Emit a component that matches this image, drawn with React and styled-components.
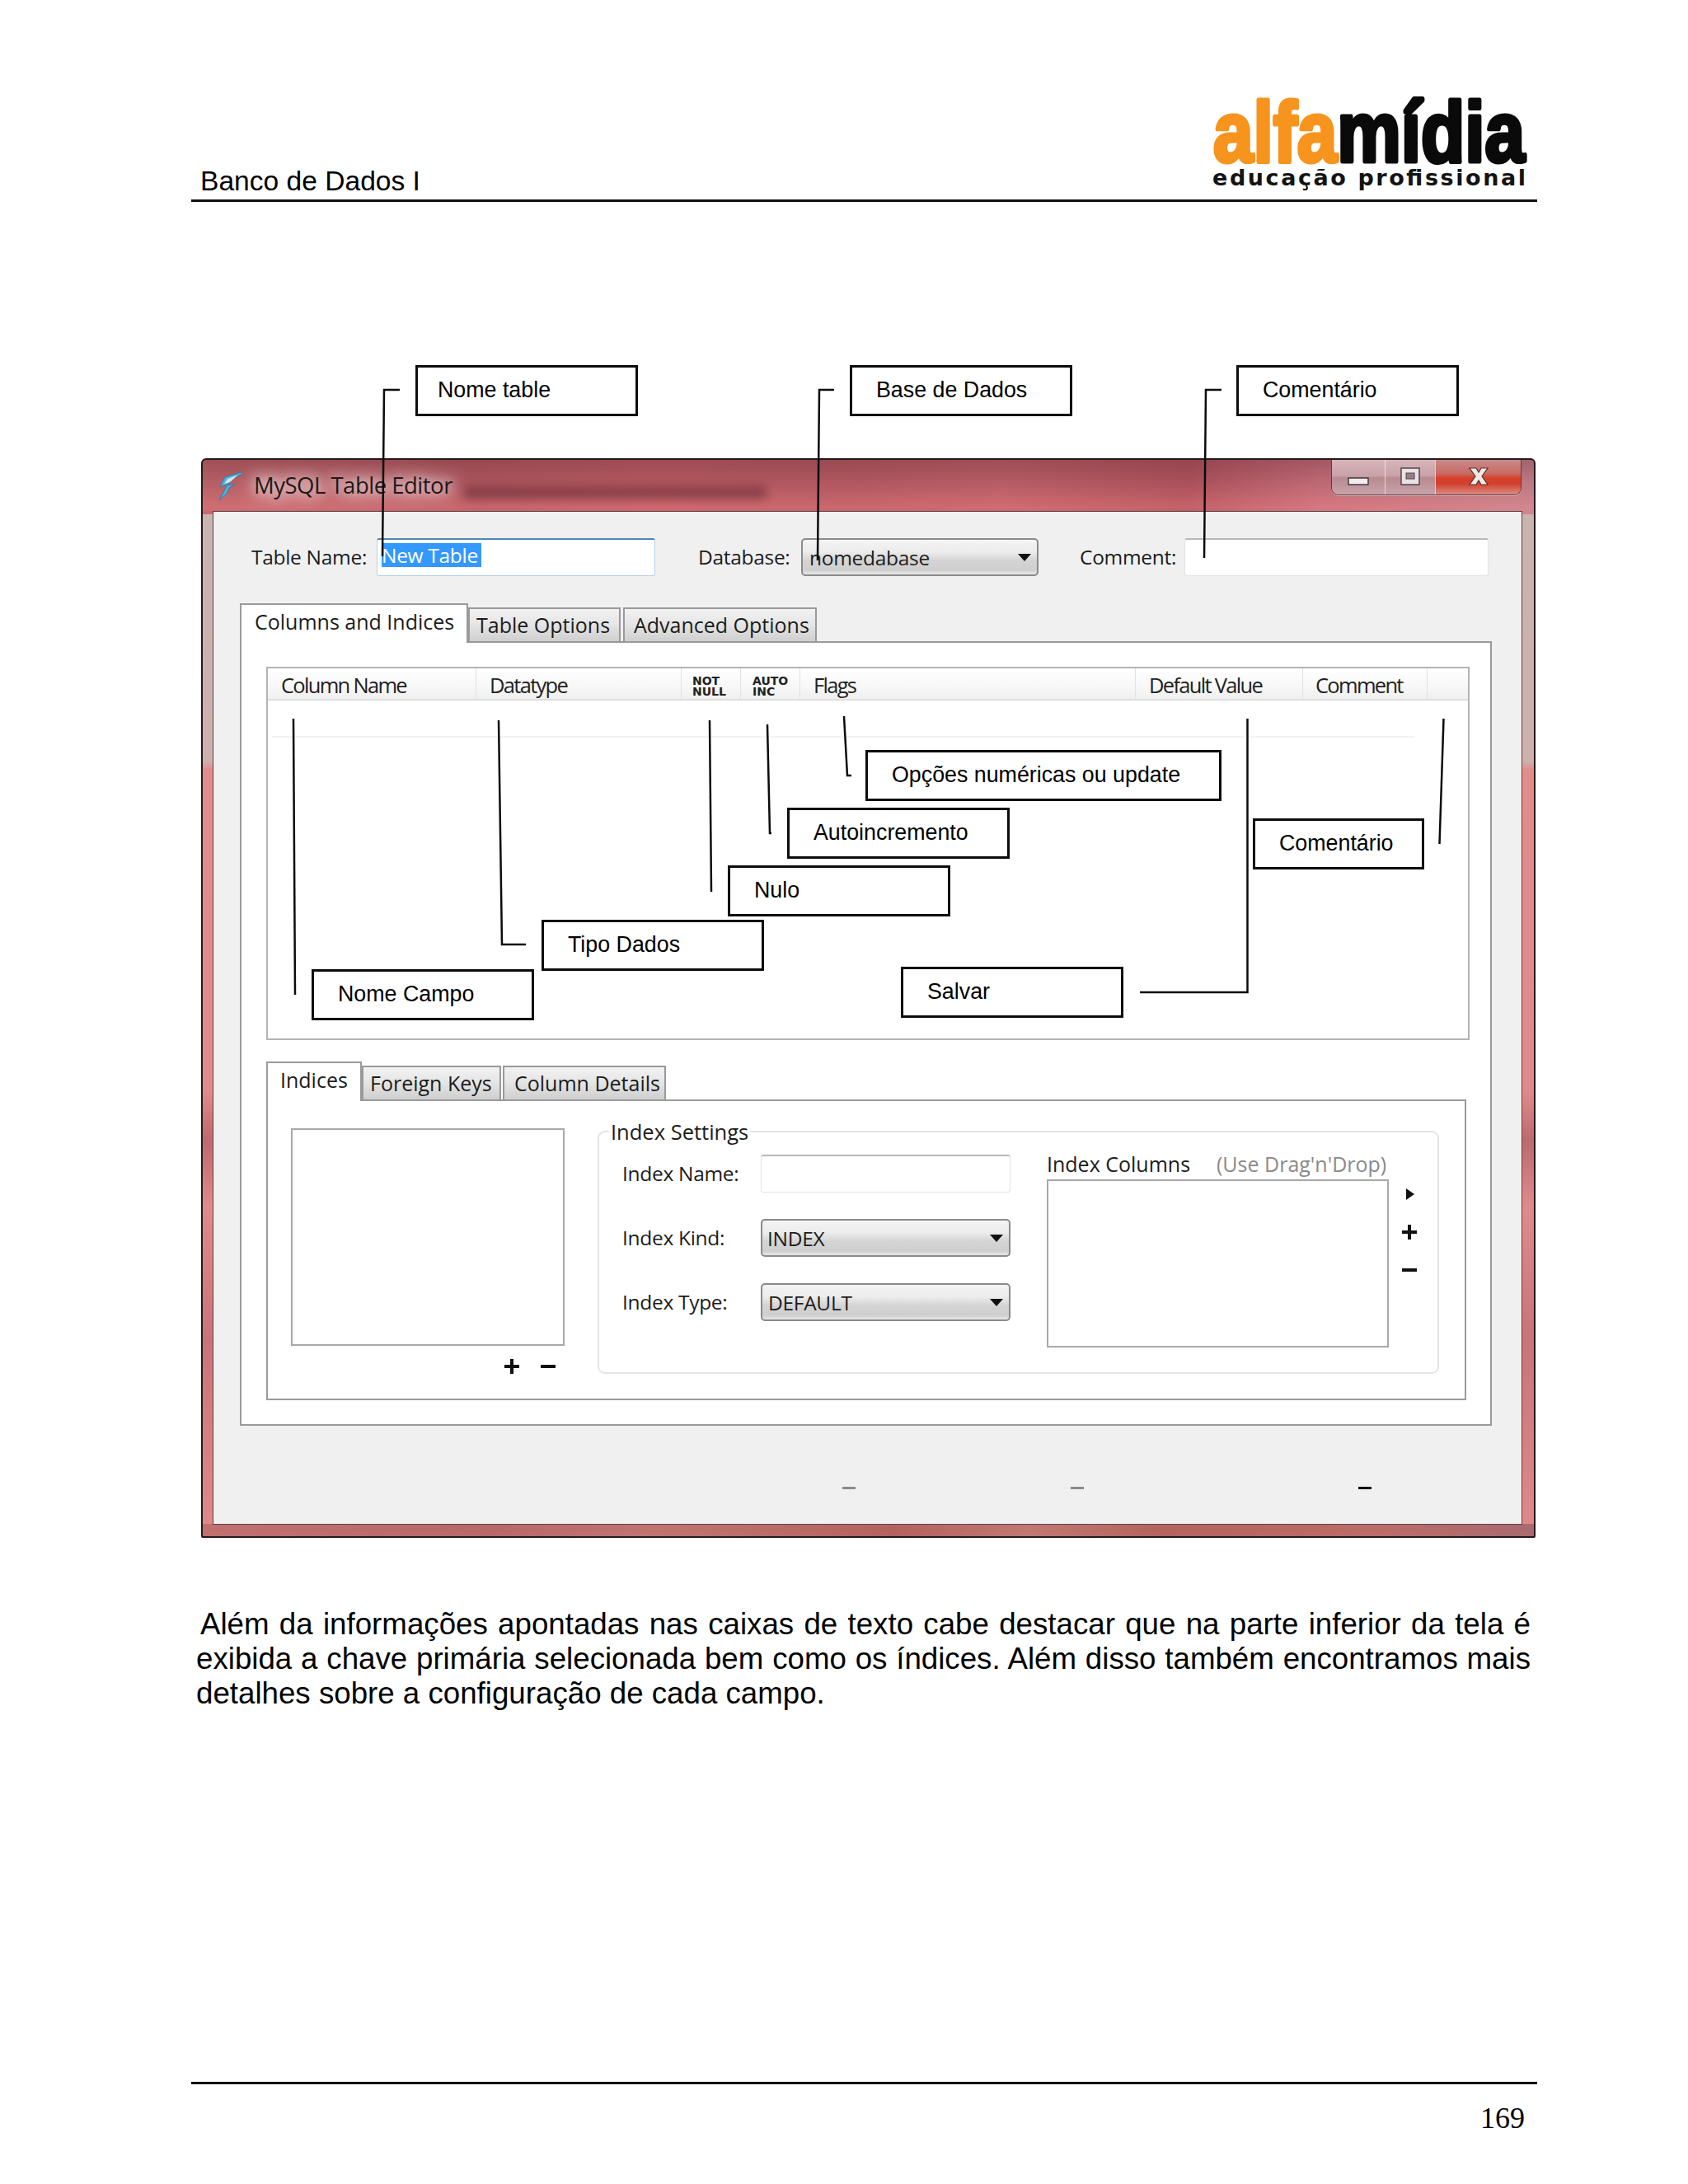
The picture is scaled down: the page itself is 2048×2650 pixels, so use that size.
import React from 'react';
import styled, { createGlobalStyle } from 'styled-components';

const GlobalStyle = createGlobalStyle`
  html, body {
    margin: 0;
    padding: 0;
    background: #fff;
  }
  * {
    box-sizing: border-box;
  }
`;

const uiFont = `'Open Sans', 'Noto Sans', sans-serif`;
const docFont = `'Liberation Sans', Arial, sans-serif`;

const Page = styled.div`
  position: relative;
  display: flex;
  flex-direction: column;
  width: 2048px;
  height: 2650px;
  padding: 0 183px 0 232px;
  overflow: hidden;
  font-family: ${docFont};
  color: #000;
`;

/* page header */
const Header = styled.header`
  display: flex;
  justify-content: space-between;
  align-items: flex-end;
  height: 245px;
  padding: 0 15px 0 11px;
  border-bottom: 3px solid #111;
`;

const HeaderTitle = styled.div`
  margin-bottom: 2px;
  font-size: 33.6px;
  line-height: 40px;
`;

const LogoSvg = styled.svg`
  display: block;
  width: 380px;
  height: 140px;
  margin: 0 -1px 6px 0;
  overflow: visible;
`;

const Logo = () => (
  <LogoSvg viewBox="0 0 380 140">
    <text
      x="1"
      y="100"
      textLength="378"
      lengthAdjust="spacingAndGlyphs"
      fontFamily="'Liberation Sans', Arial, sans-serif"
      fontWeight="700"
      fontSize="104"
      strokeWidth="5"
      strokeLinejoin="round"
    >
      <tspan fill="#f7941e" stroke="#f7941e">alfa</tspan>
      <tspan fill="#0a0a0a" stroke="#0a0a0a">mídia</tspan>
    </text>
    <text
      x="0"
      y="129"
      textLength="380"
      fontFamily="'DejaVu Sans', sans-serif"
      fontWeight="700"
      fontSize="27"
      fill="#141414"
    >
      educação profissional
    </text>
  </LogoSvg>
);

/* the MySQL window */
const Window = styled.section`
  position: relative;
  flex: none;
  width: 1619px;
  height: 1310px;
  margin: 311px 0 0 12px;
  padding: 0 15px 15px 13px;
  border: 2px solid #26181c;
  border-radius: 6px 6px 2px 2px;
  font-family: ${uiFont};
  color: #1c1c1c;
  background:
    linear-gradient(180deg, rgba(96, 40, 50, 0.38) 0, rgba(110, 50, 60, 0.16) 28px, rgba(240, 130, 130, 0.28) 58px, transparent 66px),
    linear-gradient(90deg, #c4686e 0, #b85c64 20%, #c26068 34%, #bc5e66 48%, #c4646c 60%, #b55660 74%, #cc7480 84%, #c98892 100%);
  background-size: 100% 66px;
  background-repeat: no-repeat;

  &::before {
    content: '';
    position: absolute;
    inset: 66px 0 0;
    background:
      linear-gradient(90deg, #c0706e 0, #b9686a 22%, #c07470 34%, #b4625f 52%, #c17872 62%, #b4635f 72%, #bc6c68 88%, #a86a70 100%) bottom / 100% 15px no-repeat,
      linear-gradient(180deg, #c9b4ae 0, #cdb0ac 300px, #e28c8c 310px, #e18a8c 700px, #bd6a6e 760px, #df8b8c 840px, #c97478 1000px, #e08a8a 1240px);
  }
`;

const TitleBar = styled.div`
  position: relative;
  display: flex;
  align-items: flex-start;
  height: 63px;
`;

const AppIconSvg = styled.svg`
  flex: none;
  width: 32px;
  height: 36px;
  margin: 14px 13px 0 4px;
`;

const AppIcon = () => (
  <AppIconSvg viewBox="0 0 32 36">
    <path d="M30 1 L10 7 L4 18 L13 16 L3 35 L12 27 L15 20 L22 16 L13 17 L18 9 L31 3 Z" fill="#4fb2dc" stroke="#2b7ea8" strokeWidth="1" />
    <path d="M26 4 L13 9 L9 15 L16 13 Z" fill="#c3e8f6" />
  </AppIconSvg>
);

const WindowTitle = styled.div`
  flex: none;
  margin-top: 13px;
  font-size: 27.5px;
  line-height: 36px;
  letter-spacing: -0.5px;
  color: #20181a;
  text-shadow: 0 0 14px rgba(255, 240, 240, 0.95), 0 0 22px rgba(255, 240, 240, 0.9), 0 0 30px rgba(255, 240, 240, 0.85);
`;

const BlurredTitle = styled.div`
  flex: none;
  width: 367px;
  height: 15px;
  margin: 32px 0 0 14px;
  background: rgba(86, 30, 42, 0.5);
  filter: blur(6px);
`;

const Controls = styled.div`
  display: flex;
  height: 43px;
  margin: 0 0 0 auto;
  border: 1px solid #5e3a42;
  border-top: none;
  border-radius: 0 0 9px 9px;
  overflow: hidden;
  box-shadow: 0 1px 0 rgba(255, 255, 255, 0.45);
`;

const ControlButton = styled.div`
  display: flex;
  align-items: center;
  justify-content: center;
  width: ${({ $w }) => $w}px;
  border-left: ${({ $first }) => ($first ? 'none' : '1px solid rgba(255, 240, 240, 0.7)')};
  background: ${({ $close }) =>
    $close
      ? 'linear-gradient(180deg, #c88a8c 0, #c96a62 40%, #d8402a 52%, #d2402e 68%, #dc8a80 100%)'
      : 'linear-gradient(180deg, #d6b6ba 0, #c9a2a8 46%, #b98a92 52%, #c7a4aa 100%)'};
`;

const ControlGlyph = styled.svg`
  display: block;
  width: 26px;
  height: 24px;
  margin-top: ${({ $low }) => ($low ? 10 : -2)}px;
`;

const Client = styled.div`
  position: relative;
  height: 1228px;
  padding: 32px 0 0 32px;
  background: #f0f0f0;
  box-shadow: 0 0 0 1px #5c4146;
`;

const FieldRow = styled.div`
  display: flex;
  height: 46px;
  padding-left: 14px;
`;

const FieldLabel = styled.div`
  flex: none;
  width: ${({ $w }) => $w}px;
  margin-left: ${({ $ml }) => $ml || 0}px;
  padding-top: 7px;
  font-size: 24.5px;
  line-height: 32px;
  letter-spacing: -0.3px;
  white-space: nowrap;
`;

const TextBox = styled.div`
  flex: none;
  display: flex;
  align-items: center;
  width: ${({ $w }) => $w}px;
  height: 46px;
  padding-left: 5px;
  background: #fff;
  border: 1px solid ${({ $focus }) => ($focus ? '#b4d2ea' : '#e3e3e3')};
  border-top: 2px solid ${({ $focus }) => ($focus ? '#4f86b8' : '#b8b8b8')};
  border-radius: 3px;
`;

const Selected = styled.span`
  width: 121px;
  height: 29px;
  margin-top: -6px;
  background: #3399ff;
  color: #fff;
  font-size: 24.5px;
  line-height: 29px;
  letter-spacing: -0.3px;
  white-space: nowrap;
`;

const Select = styled.div`
  flex: none;
  display: flex;
  align-items: center;
  justify-content: space-between;
  width: ${({ $w }) => $w}px;
  height: 46px;
  padding: 0 7px 0 ${({ $pad }) => $pad || 8}px;
  background: linear-gradient(180deg, #f4f4f4 0, #ececec 35%, #d4d4d4 60%, #cfcfcf 88%, #e8e8e8 100%);
  border: 2px solid #8a8a8a;
  border-radius: 5px;
  font-size: 24.5px;
  letter-spacing: -0.3px;
`;

const Caret = styled.span`
  flex: none;
  width: 0;
  height: 0;
  border-left: 8px solid transparent;
  border-right: 8px solid transparent;
  border-top: 9px solid #111;
`;

const TabStrip = styled.div`
  position: relative;
  z-index: 1;
  display: flex;
  align-items: flex-end;
  margin: ${({ $top }) => $top}px 0 -2px;
`;

const Tab = styled.div`
  flex: none;
  width: ${({ $w }) => $w}px;
  height: ${({ $active }) => ($active ? 48 : 43)}px;
  margin-left: ${({ $ml }) => $ml || 0}px;
  padding: ${({ $active }) => ($active ? 4 : 3)}px 0 0 ${({ $pad }) => $pad}px;
  border: 2px solid #9a9a9a;
  border-bottom: ${({ $active }) => ($active ? 'none' : '2px solid #9a9a9a')};
  background: ${({ $active }) => ($active ? '#fff' : 'linear-gradient(180deg, #f2f2f2 0, #e6e6e6 45%, #cfcfcf 100%)')};
  font-size: 25px;
  line-height: 32px;
  white-space: nowrap;
`;

const TabPanel = styled.div`
  width: ${({ $w }) => $w}px;
  height: ${({ $h }) => $h}px;
  background: #fff;
  border: 2px solid #9a9a9a;
`;

const MainPanel = styled(TabPanel)`
  padding: 29px 0 0 30px;
`;

const Columns = styled.div`
  width: 1460px;
  height: 453px;
  border: 2px solid #b4b4b4;
`;

const ColumnsHead = styled.div`
  display: flex;
  height: 39px;
  background: linear-gradient(180deg, #fff 0, #f9f9f9 50%, #f0f0f0 100%);
  border-bottom: 2px solid #dedede;
`;

const HeadCell = styled.div`
  flex: none;
  width: ${({ $w }) => $w}px;
  padding: 3px 0 0 ${({ $pad }) => $pad}px;
  border-right: 1px solid #e2e2e2;
  font-size: 25.5px;
  line-height: 34px;
  letter-spacing: -1.7px;
  white-space: nowrap;
  color: #222;
`;

const SmallHead = styled(HeadCell)`
  padding-top: 9px;
  font-family: 'DejaVu Sans', sans-serif;
  font-size: 14px;
  font-weight: 700;
  line-height: 13px;
  letter-spacing: 0;
`;

const RowRule = styled.div`
  height: 2px;
  margin: 43px 65px 0 5px;
  background: #f3f3f3;
`;

const SubPanel = styled(TabPanel)`
  display: flex;
  align-items: flex-start;
  padding: 33px 0 0 28px;
`;

const LeftColumn = styled.div`
  flex: none;
  width: 332px;
`;

const ListBox = styled.div`
  width: ${({ $w }) => $w}px;
  height: ${({ $h }) => $h}px;
  background: #fff;
  border: 2px solid #a8a8a8;
`;

const ListTools = styled.div`
  display: flex;
  justify-content: flex-end;
  gap: 26px;
  padding: 16px 11px 0 0;
`;

const ToolSvg = styled.svg`
  display: block;
  width: 18px;
  height: 18px;
`;

const ToolIcon = ({ kind }) => (
  <ToolSvg viewBox="0 0 18 18">
    {kind === 'plus' && <path d="M7 0h4v7h7v4h-7v7H7v-7H0V7h7z" fill="#111" />}
    {kind === 'minus' && <rect x="0" y="7" width="18" height="4" fill="#111" />}
    {kind === 'next' && <path d="M5 2 L15 9 L5 16z" fill="#111" />}
  </ToolSvg>
);

const Group = styled.div`
  position: relative;
  flex: none;
  display: flex;
  width: 1021px;
  height: 295px;
  margin: 3px 0 0 40px;
  padding: 27px 0 0 28px;
  border: 2px solid #e4e4e4;
  border-radius: 9px;
`;

const Legend = styled.div`
  position: absolute;
  top: -17px;
  left: 12px;
  padding: 0 2px;
  background: #fff;
  font-size: 25.5px;
  line-height: 32px;
`;

const FormColumn = styled.div`
  flex: none;
  display: flex;
  flex-direction: column;
  gap: 32px;
`;

const FormRow = styled.div`
  display: flex;
`;

const ColumnsBlock = styled.div`
  flex: none;
  margin-left: 44px;
`;

const BlockHead = styled.div`
  display: flex;
  height: 30px;
  font-size: 25px;
  line-height: 22px;
  white-space: nowrap;
`;

const BlockTitle = styled.span`
  width: 206px;
`;

const BlockHint = styled.span`
  color: #8a8a8a;
`;

const SideTools = styled.div`
  flex: none;
  display: flex;
  flex-direction: column;
  gap: 28px;
  margin: 39px 0 0 16px;
`;

const DashRow = styled.div`
  display: flex;
  padding: 74px 0 0 731px;
`;

const Dash = styled.span`
  flex: none;
  width: 16px;
  height: 3px;
  margin-left: ${({ $ml }) => $ml || 0}px;
  background: ${({ $dark }) => ($dark ? '#000' : '#8a8a8a')};
`;

/* text under the window */
const Paragraph = styled.p`
  width: 1619px;
  margin: 84px 0 0 6px;
  font-size: 36.7px;
  line-height: 42px;
  text-align: justify;
  text-indent: 5px;
`;

const Footer = styled.footer`
  margin-top: auto;
  height: 124px;
  padding: 21px 15px 0 0;
  border-top: 3px solid #111;
  text-align: right;
  font-family: 'Liberation Serif', 'Times New Roman', serif;
  font-size: 36px;
  line-height: 40px;
`;

/* callouts drawn over the screenshot */
const Callout = styled.div`
  position: absolute;
  left: ${({ $x }) => $x}px;
  top: ${({ $y }) => $y}px;
  display: flex;
  align-items: center;
  width: ${({ $w }) => $w}px;
  height: 62px;
  padding: 0 0 2px ${({ $pad }) => $pad || 29}px;
  background: #fff;
  border: 3px solid #0c0c0c;
  font-family: ${docFont};
  font-size: 26.8px;
  color: #000;
  white-space: nowrap;
`;

const Leaders = styled.svg`
  position: absolute;
  left: 0;
  top: 0;
  width: 2048px;
  height: 2650px;
  pointer-events: none;
`;

const callouts = [
  { label: 'Nome table', x: 504, y: 443, w: 270, pad: 24 },
  { label: 'Base de Dados', x: 1031, y: 443, w: 270 },
  { label: 'Comentário', x: 1500, y: 443, w: 270 },
  { label: 'Opções numéricas ou update', x: 1050, y: 910, w: 432 },
  { label: 'Autoincremento', x: 955, y: 980, w: 270 },
  { label: 'Nulo', x: 883, y: 1050, w: 270 },
  { label: 'Tipo Dados', x: 657, y: 1116, w: 270 },
  { label: 'Nome Campo', x: 378, y: 1176, w: 270 },
  { label: 'Salvar', x: 1093, y: 1173, w: 270 },
  { label: 'Comentário', x: 1520, y: 993, w: 208 },
];

const leaderPaths = [
  'M485 473 H466 L464 675',
  'M1012 473 H994 L992 680',
  'M1482 473 H1463 L1461 677',
  'M356 872 L358 1207',
  'M605 874 L609 1146 H638',
  'M861 874 L863 1082',
  'M931 879 L934 1011 H936',
  'M1024 869 L1028 941 H1033',
  'M1383 1204 H1513.5 V872',
  'M1751.5 872 L1746.5 1024',
];

export default function App() {
  return (
    <Page>
      <GlobalStyle />
      <Header>
        <HeaderTitle>Banco de Dados I</HeaderTitle>
        <Logo />
      </Header>

      <Window>
        <TitleBar>
          <AppIcon />
          <WindowTitle>MySQL Table Editor</WindowTitle>
          <BlurredTitle />
          <Controls>
            <ControlButton $w={64} $first>
              <ControlGlyph viewBox="0 0 26 24" $low>
                <rect x="1" y="8" width="24" height="8" fill="#f1ecee" stroke="#4a3a40" strokeWidth="1.5" />
              </ControlGlyph>
            </ControlButton>
            <ControlButton $w={61}>
              <ControlGlyph viewBox="0 0 26 24">
                <rect x="2" y="2" width="22" height="20" fill="#e9e2e4" stroke="#55444a" strokeWidth="1.5" />
                <rect x="8" y="8" width="10" height="7" fill="#9c7d86" stroke="#55444a" strokeWidth="1" />
              </ControlGlyph>
            </ControlButton>
            <ControlButton $w={104} $close>
              <ControlGlyph viewBox="0 0 26 24">
                <path d="M2 2h8l3 5 3-5h8l-7 10 7 10h-8l-3-5-3 5H2l7-10z" fill="#f1e9e6" stroke="#5a3030" strokeWidth="1.2" />
              </ControlGlyph>
            </ControlButton>
          </Controls>
        </TitleBar>

        <Client>
          <FieldRow>
            <FieldLabel $w={152}>Table Name:</FieldLabel>
            <TextBox $w={338} $focus>
              <Selected>New Table</Selected>
            </TextBox>
            <FieldLabel $w={125} $ml={52}>Database:</FieldLabel>
            <Select $w={288}>
              nomedabase
              <Caret />
            </Select>
            <FieldLabel $w={127} $ml={50}>Comment:</FieldLabel>
            <TextBox $w={369} />
          </FieldRow>

          <TabStrip $top={33}>
            <Tab $w={277} $pad={16} $active>Columns and Indices</Tab>
            <Tab $w={185} $pad={8}>Table Options</Tab>
            <Tab $w={235} $ml={3} $pad={11}>Advanced Options</Tab>
          </TabStrip>
          <MainPanel $w={1519} $h={952}>
            <Columns>
              <ColumnsHead>
                <HeadCell $w={253} $pad={16}>Column Name</HeadCell>
                <HeadCell $w={249} $pad={16}>Datatype</HeadCell>
                <SmallHead $w={72} $pad={13}>NOT<br />NULL</SmallHead>
                <SmallHead $w={72} $pad={14}>AUTO<br />INC</SmallHead>
                <HeadCell $w={407} $pad={16}>Flags</HeadCell>
                <HeadCell $w={203} $pad={16}>Default Value</HeadCell>
                <HeadCell $w={151} $pad={15}>Comment</HeadCell>
              </ColumnsHead>
              <RowRule />
            </Columns>

            <TabStrip $top={26}>
              <Tab $w={116} $pad={15} $active>Indices</Tab>
              <Tab $w={169} $pad={8}>Foreign Keys</Tab>
              <Tab $w={198} $ml={2} $pad={12}>Column Details</Tab>
            </TabStrip>
            <SubPanel $w={1456} $h={365}>
              <LeftColumn>
                <ListBox $w={332} $h={264} />
                <ListTools>
                  <ToolIcon kind="plus" />
                  <ToolIcon kind="minus" />
                </ListTools>
              </LeftColumn>

              <Group>
                <Legend>Index Settings</Legend>
                <FormColumn>
                  <FormRow>
                    <FieldLabel $w={168}>Index Name:</FieldLabel>
                    <TextBox $w={303} />
                  </FormRow>
                  <FormRow>
                    <FieldLabel $w={168}>Index Kind:</FieldLabel>
                    <Select $w={303} $pad={6}>
                      INDEX
                      <Caret />
                    </Select>
                  </FormRow>
                  <FormRow>
                    <FieldLabel $w={168}>Index Type:</FieldLabel>
                    <Select $w={303} $pad={7}>
                      DEFAULT
                      <Caret />
                    </Select>
                  </FormRow>
                </FormColumn>
                <ColumnsBlock>
                  <BlockHead>
                    <BlockTitle>Index Columns</BlockTitle>
                    <BlockHint>(Use Drag'n'Drop)</BlockHint>
                  </BlockHead>
                  <ListBox $w={415} $h={204} />
                </ColumnsBlock>
                <SideTools>
                  <ToolIcon kind="next" />
                  <ToolIcon kind="plus" />
                  <ToolIcon kind="minus" />
                </SideTools>
              </Group>
            </SubPanel>
          </MainPanel>

          <DashRow>
            <Dash />
            <Dash $ml={261} />
            <Dash $ml={333} $dark />
          </DashRow>
        </Client>
      </Window>

      <Paragraph>
        Além da informações apontadas nas caixas de texto cabe destacar que na parte inferior da tela é exibida a chave
        primária selecionada bem como os índices. Além disso também encontramos mais detalhes sobre a configuração de
        cada campo.
      </Paragraph>

      <Footer>169</Footer>

      {callouts.map((c) => (
        <Callout key={c.label + c.x} $x={c.x} $y={c.y} $w={c.w} $pad={c.pad}>
          {c.label}
        </Callout>
      ))}
      <Leaders viewBox="0 0 2048 2650">
        {leaderPaths.map((d) => (
          <path key={d} d={d} fill="none" stroke="#0c0c0c" strokeWidth="2.5" />
        ))}
      </Leaders>
    </Page>
  );
}
